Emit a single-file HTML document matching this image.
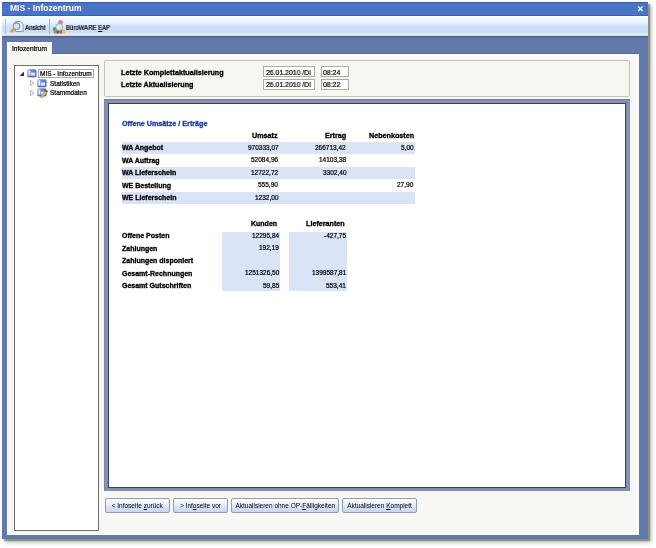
<!DOCTYPE html>
<html><head><meta charset="utf-8"><style>
html,body{margin:0;padding:0;}
body{width:656px;height:548px;overflow:hidden;background:#fff;position:relative;font-family:"Liberation Sans", sans-serif;}
body>div{position:absolute;}
.t{line-height:1;white-space:nowrap;will-change:transform;}
</style></head><body>
<div style="left:2px;top:2px;width:646px;height:537px;background:#6279ab;box-shadow:2px 2px 1px rgba(60,70,40,0.35),3px 3px 4px rgba(40,50,30,0.4);"></div>
<div style="left:2px;top:2px;width:646px;height:14px;background:#4774c6;border-top:1px solid #3a5cab;border-bottom:1px solid #3d60ae;box-sizing:border-box;"></div>
<div class="t" style="left:10.1px;top:4.46px;font-size:8.55px;font-weight:bold;-webkit-text-stroke:0.32px #fff;color:#fff;-webkit-text-stroke:0;">MIS - Infozentrum</div>
<div style="left:2px;top:16px;width:646px;height:20px;background:linear-gradient(#ffffff,#f0f9ff 10%,#ebf5ff 30%,#d2e2fa 50%,#c9dbf7 80%,#e6f2f4 91%,#c5d1de 100%);"></div>
<div style="left:5px;top:19px;width:1px;height:15px;background:#b7c4d8;"></div>
<div style="left:49px;top:19px;width:1px;height:15px;background:#a5b2c6;"></div>
<div class="t" style="left:24.5px;top:24.07px;font-size:7.0px;-webkit-text-stroke:0.22px #000;color:#000;transform:scaleX(0.89);transform-origin:0 0;">Ansicht</div>
<div class="t" style="left:66.3px;top:24.76px;font-size:6.9px;-webkit-text-stroke:0.22px #000;color:#000;transform:scaleX(0.87);transform-origin:0 0;">B&#252;roWARE <u>E</u>AP</div>
<div style="left:2px;top:36px;width:646px;height:2px;background:#56679a;"></div>
<div style="left:7px;top:53px;width:632px;height:1px;background:#5c6c9a;"></div>
<div style="left:7px;top:54px;width:632px;height:481px;background:#f8f7f3;border:1px solid #fff;border-top:2px solid #fff;border-right:2px solid #fbfdff;box-sizing:border-box;"></div>
<div style="left:7px;top:42px;width:45px;height:14px;background:#f8f7f3;border-left:1px solid #fff;border-top:1px solid #fff;border-right:1px solid #e6eefa;box-sizing:border-box;"></div>
<div class="t" style="left:12px;top:45.59px;font-size:6.63px;-webkit-text-stroke:0.22px #000;color:#000;">Infozentrum</div>
<div style="left:14px;top:65px;width:85px;height:466px;background:#fff;border:1px solid #6e6e66;box-sizing:border-box;"></div>
<div style="left:104px;top:60px;width:526px;height:37px;background:#f7f6f1;border:1px solid #c4c3bb;border-radius:2px;box-sizing:border-box;"></div>
<div class="t" style="left:121.4px;top:68.61px;font-size:7.2px;font-weight:bold;-webkit-text-stroke:0.32px #000;color:#000;">Letzte Komplettaktualisierung</div>
<div class="t" style="left:121.4px;top:80.71px;font-size:7.2px;font-weight:bold;-webkit-text-stroke:0.32px #000;color:#000;">Letzte Aktualisierung</div>
<div style="left:263px;top:66px;width:52px;height:11px;background:#fff;border:1px solid #acacac;box-sizing:border-box;"></div>
<div style="left:321px;top:66px;width:28px;height:11px;background:#fff;border:1px solid #acacac;box-sizing:border-box;"></div>
<div class="t" style="left:265.5px;top:68.84px;font-size:7.4px;-webkit-text-stroke:0.22px #000;color:#000;transform:scaleX(0.93);transform-origin:0 0;">26.01.2010 /Di</div>
<div class="t" style="left:322.8px;top:68.84px;font-size:7.4px;-webkit-text-stroke:0.22px #000;color:#000;transform:scaleX(0.93);transform-origin:0 0;">08:24</div>
<div style="left:263px;top:79px;width:52px;height:11px;background:#fff;border:1px solid #acacac;box-sizing:border-box;"></div>
<div style="left:321px;top:79px;width:28px;height:11px;background:#fff;border:1px solid #acacac;box-sizing:border-box;"></div>
<div class="t" style="left:265.5px;top:81.24px;font-size:7.4px;-webkit-text-stroke:0.22px #000;color:#000;transform:scaleX(0.93);transform-origin:0 0;">26.01.2010 /Di</div>
<div class="t" style="left:322.8px;top:81.24px;font-size:7.4px;-webkit-text-stroke:0.22px #000;color:#000;transform:scaleX(0.93);transform-origin:0 0;">08:22</div>
<div style="left:104px;top:99px;width:526px;height:392px;background:#8290b2;border-top:1px solid #6f7d9e;border-left:1px solid #7a88a8;box-sizing:border-box;"></div>
<div style="left:108px;top:103px;width:518px;height:385px;background:#fff;border:1px solid #34405e;box-sizing:border-box;"></div>
<div class="t" style="left:122px;top:119.91px;font-size:7.2px;font-weight:bold;-webkit-text-stroke:0.32px #1f3b9a;color:#1f3b9a;">Offene Ums&#228;tze / Ertr&#228;ge</div>
<div class="t" style="right:378.5px;top:132.31px;font-size:7.2px;font-weight:bold;-webkit-text-stroke:0.32px #000;color:#000;">Umsatz</div>
<div class="t" style="right:310px;top:132.31px;font-size:7.2px;font-weight:bold;-webkit-text-stroke:0.32px #000;color:#000;">Ertrag</div>
<div class="t" style="right:242.3px;top:132.31px;font-size:7.2px;font-weight:bold;-webkit-text-stroke:0.32px #000;color:#000;">Nebenkosten</div>
<div style="left:121.5px;top:142.0px;width:293.0px;height:12.0px;background:#dae4f6;"></div>
<div class="t" style="left:122px;top:144.27px;font-size:7.0px;font-weight:bold;-webkit-text-stroke:0.32px #000;color:#000;">WA Angebot</div>
<div class="t" style="right:377.7px;top:144.70px;font-size:6.5px;-webkit-text-stroke:0.22px #000;color:#000;">970333,07</div>
<div class="t" style="right:310px;top:144.70px;font-size:6.5px;-webkit-text-stroke:0.22px #000;color:#000;">266713,42</div>
<div class="t" style="right:242.39999999999998px;top:144.70px;font-size:6.5px;-webkit-text-stroke:0.22px #000;color:#000;">5,00</div>
<div class="t" style="left:122px;top:156.77px;font-size:7.0px;font-weight:bold;-webkit-text-stroke:0.32px #000;color:#000;">WA Auftrag</div>
<div class="t" style="right:377.7px;top:157.20px;font-size:6.5px;-webkit-text-stroke:0.22px #000;color:#000;">52084,96</div>
<div class="t" style="right:310px;top:157.20px;font-size:6.5px;-webkit-text-stroke:0.22px #000;color:#000;">14103,38</div>
<div style="left:121.5px;top:167.0px;width:293.0px;height:12.0px;background:#dae4f6;"></div>
<div class="t" style="left:122px;top:169.27px;font-size:7.0px;font-weight:bold;-webkit-text-stroke:0.32px #000;color:#000;">WA Lieferschein</div>
<div class="t" style="right:377.7px;top:169.70px;font-size:6.5px;-webkit-text-stroke:0.22px #000;color:#000;">12722,72</div>
<div class="t" style="right:310px;top:169.70px;font-size:6.5px;-webkit-text-stroke:0.22px #000;color:#000;">3302,40</div>
<div class="t" style="left:122px;top:181.77px;font-size:7.0px;font-weight:bold;-webkit-text-stroke:0.32px #000;color:#000;">WE Bestellung</div>
<div class="t" style="right:377.7px;top:182.20px;font-size:6.5px;-webkit-text-stroke:0.22px #000;color:#000;">555,90</div>
<div class="t" style="right:242.39999999999998px;top:182.20px;font-size:6.5px;-webkit-text-stroke:0.22px #000;color:#000;">27,90</div>
<div style="left:121.5px;top:192.0px;width:293.0px;height:12.0px;background:#dae4f6;"></div>
<div class="t" style="left:122px;top:194.27px;font-size:7.0px;font-weight:bold;-webkit-text-stroke:0.32px #000;color:#000;">WE Lieferschein</div>
<div class="t" style="right:377.7px;top:194.70px;font-size:6.5px;-webkit-text-stroke:0.22px #000;color:#000;">1232,00</div>
<div class="t" style="right:379px;top:220.47px;font-size:7.0px;font-weight:bold;-webkit-text-stroke:0.32px #000;color:#000;">Kunden</div>
<div class="t" style="right:311.3px;top:220.31px;font-size:7.2px;font-weight:bold;-webkit-text-stroke:0.32px #000;color:#000;">Lieferanten</div>
<div style="left:222px;top:231.5px;width:58px;height:59.5px;background:#dae4f6;"></div>
<div style="left:289px;top:231.5px;width:58px;height:59.5px;background:#dae4f6;"></div>
<div class="t" style="left:122px;top:232.07px;font-size:7.0px;font-weight:bold;-webkit-text-stroke:0.32px #000;color:#000;">Offene Posten</div>
<div class="t" style="right:376.7px;top:232.50px;font-size:6.5px;-webkit-text-stroke:0.22px #000;color:#000;">12295,84</div>
<div class="t" style="right:310px;top:232.50px;font-size:6.5px;-webkit-text-stroke:0.22px #000;color:#000;">-427,75</div>
<div class="t" style="left:122px;top:244.57px;font-size:7.0px;font-weight:bold;-webkit-text-stroke:0.32px #000;color:#000;">Zahlungen</div>
<div class="t" style="right:376.7px;top:245.00px;font-size:6.5px;-webkit-text-stroke:0.22px #000;color:#000;">192,19</div>
<div class="t" style="left:122px;top:257.07px;font-size:7.0px;font-weight:bold;-webkit-text-stroke:0.32px #000;color:#000;">Zahlungen disponiert</div>
<div class="t" style="left:122px;top:269.57px;font-size:7.0px;font-weight:bold;-webkit-text-stroke:0.32px #000;color:#000;">Gesamt-Rechnungen</div>
<div class="t" style="right:376.7px;top:270.00px;font-size:6.5px;-webkit-text-stroke:0.22px #000;color:#000;">1251326,50</div>
<div class="t" style="right:310px;top:270.00px;font-size:6.5px;-webkit-text-stroke:0.22px #000;color:#000;">1399587,81</div>
<div class="t" style="left:122px;top:282.07px;font-size:7.0px;font-weight:bold;-webkit-text-stroke:0.32px #000;color:#000;">Gesamt Gutschriften</div>
<div class="t" style="right:376.7px;top:282.50px;font-size:6.5px;-webkit-text-stroke:0.22px #000;color:#000;">59,85</div>
<div class="t" style="right:310px;top:282.50px;font-size:6.5px;-webkit-text-stroke:0.22px #000;color:#000;">553,41</div>
<div style="left:105px;top:498px;width:64.5px;height:15px;background:linear-gradient(#ffffff,#eef2fb 30%,#d6e0f4 70%,#c9d7f0);border:1px solid #939db2;border-radius:2px;box-sizing:border-box;"></div>
<div class="t" style="left:105px;width:64.5px;top:502.50px;font-size:6.5px;text-align:center;">&lt; Infoseite <u>z</u>ur&#252;ck</div>
<div style="left:172.5px;top:498px;width:55.0px;height:15px;background:linear-gradient(#ffffff,#eef2fb 30%,#d6e0f4 70%,#c9d7f0);border:1px solid #939db2;border-radius:2px;box-sizing:border-box;"></div>
<div class="t" style="left:172.5px;width:55.0px;top:502.50px;font-size:6.5px;text-align:center;">&gt; Inf<u>o</u>seite vor</div>
<div style="left:230.5px;top:498px;width:108.5px;height:15px;background:linear-gradient(#ffffff,#eef2fb 30%,#d6e0f4 70%,#c9d7f0);border:1px solid #939db2;border-radius:2px;box-sizing:border-box;"></div>
<div class="t" style="left:230.5px;width:108.5px;top:502.50px;font-size:6.5px;text-align:center;">Aktualisieren ohne OP-<u>F</u>&#228;lligkeiten</div>
<div style="left:342px;top:498px;width:75px;height:15px;background:linear-gradient(#ffffff,#eef2fb 30%,#d6e0f4 70%,#c9d7f0);border:1px solid #939db2;border-radius:2px;box-sizing:border-box;"></div>
<div class="t" style="left:342px;width:75px;top:502.50px;font-size:6.5px;text-align:center;">Aktualisieren <u>K</u>omplett</div>
<svg style="position:absolute;left:9px;top:20px" width="15" height="13" viewBox="0 0 15 13"><path d="M6.5 1.5h5l2.5 2.5v7.5h-7.5z" fill="#eef1f8" stroke="#8d97ad" stroke-width="1"/><circle cx="7.5" cy="6.2" r="3.3" fill="#cfe6f7" stroke="#7f8fa8" stroke-width="1.1"/><path d="M2.6 11.2l2.2-2.2" stroke="#c9a274" stroke-width="2.8" stroke-linecap="round"/></svg>
<svg style="position:absolute;left:52px;top:19px" width="14" height="15" viewBox="0 0 14 15"><circle cx="8.5" cy="3.2" r="2.3" fill="#e07a7a"/><circle cx="3" cy="10.3" r="2.2" fill="#4aa05a"/><rect x="1.5" y="11" width="3.5" height="3.5" fill="#c89048"/><rect x="4.5" y="11.5" width="3" height="3" fill="#4a5ea8"/><rect x="7.5" y="11" width="3" height="3.5" fill="#d85a4a"/><rect x="10" y="10.5" width="3.2" height="4" fill="#e8c060"/><circle cx="7.2" cy="8" r="3.4" fill="#d8ecfa" stroke="#8aa0b8" stroke-width="0.8"/></svg>
<svg style="position:absolute;left:19px;top:71px" width="6" height="6" viewBox="0 0 6 6"><path d="M5 0.5V5H0.5z" fill="#333"/></svg>
<svg style="position:absolute;left:30px;top:80px" width="5" height="6" viewBox="0 0 5 6"><path d="M0.5 0.5L4 3 0.5 5.5z" fill="#fff" stroke="#a8a8a8" stroke-width="0.9"/></svg>
<svg style="position:absolute;left:30px;top:89.5px" width="5" height="6" viewBox="0 0 5 6"><path d="M0.5 0.5L4 3 0.5 5.5z" fill="#fff" stroke="#a8a8a8" stroke-width="0.9"/></svg>
<svg style="position:absolute;left:26.8px;top:69px" width="11" height="10" viewBox="0 0 11 10"><defs><linearGradient id="g337" x1="0" y1="0.2" x2="1" y2="0"><stop offset="0" stop-color="#9098c8"/><stop offset="0.6" stop-color="#6a86d2"/><stop offset="1" stop-color="#3f6cc8"/></linearGradient></defs><rect x="0.3" y="0.3" width="9.2" height="8" rx="1.8" fill="url(#g337)"/><rect x="0.3" y="6.8" width="9.2" height="1.5" rx="0.7" fill="#5c6898" opacity="0.8"/><path d="M1.6 2.5h1.6v4h-1.6z" fill="#f4f6ff"/><circle cx="2.4" cy="2.2" r="0.9" fill="#f4f6ff"/><rect x="4" y="3.6" width="4" height="3" fill="#dde8f8"/></svg>
<svg style="position:absolute;left:636px;top:4px" width="9" height="9" viewBox="0 0 9 9"><path d="M2.2 2.5L6.6 7M6.6 2.5L2.2 7" stroke="#fff" stroke-width="1.2"/></svg>
<svg style="position:absolute;left:37.2px;top:78.5px" width="11" height="10" viewBox="0 0 11 10"><defs><linearGradient id="g450" x1="0" y1="0.2" x2="1" y2="0"><stop offset="0" stop-color="#9098c8"/><stop offset="0.6" stop-color="#6a86d2"/><stop offset="1" stop-color="#3f6cc8"/></linearGradient></defs><rect x="0.3" y="0.3" width="9.2" height="8" rx="1.8" fill="url(#g450)"/><rect x="0.3" y="6.8" width="9.2" height="1.5" rx="0.7" fill="#5c6898" opacity="0.8"/><path d="M1.6 2.5h1.6v4h-1.6z" fill="#f4f6ff"/><circle cx="2.4" cy="2.2" r="0.9" fill="#f4f6ff"/><rect x="4" y="3.6" width="4" height="3" fill="#dde8f8"/></svg>
<svg style="position:absolute;left:37.2px;top:88px" width="11" height="10" viewBox="0 0 11 10"><defs><linearGradient id="g460" x1="0" y1="0.2" x2="1" y2="0"><stop offset="0" stop-color="#9098c8"/><stop offset="0.6" stop-color="#6a86d2"/><stop offset="1" stop-color="#3f6cc8"/></linearGradient></defs><rect x="0.3" y="0.3" width="9.2" height="8" rx="1.8" fill="url(#g460)"/><rect x="0.3" y="6.8" width="9.2" height="1.5" rx="0.7" fill="#5c6898" opacity="0.8"/><path d="M1.6 2.5h1.6v4h-1.6z" fill="#f4f6ff"/><circle cx="2.4" cy="2.2" r="0.9" fill="#f4f6ff"/><rect x="4" y="3.6" width="4" height="3" fill="#dde8f8"/><path d="M3.2 8.6l5.2-5.6 1.6 1.5-5.2 5.6z" fill="#d8d070" stroke="#3a4030" stroke-width="0.5"/><path d="M8.4 3l1.1-1.1 1.5 1.4-1 1.2z" fill="#a03020"/></svg>
<div style="left:38.4px;top:69.3px;width:55.6px;height:8.700000000000003px;border:1px solid #a8a8a8;box-sizing:border-box;background:#fff;"></div>
<div class="t" style="left:40.2px;top:70.70px;font-size:6.5px;-webkit-text-stroke:0.22px #000;color:#000;">MIS - Infozentrum</div>
<div class="t" style="left:50px;top:80.80px;font-size:6.5px;-webkit-text-stroke:0.22px #000;color:#000;">Statistiken</div>
<div class="t" style="left:50px;top:89.70px;font-size:6.5px;-webkit-text-stroke:0.22px #000;color:#000;">Stammdaten</div>
</body></html>
